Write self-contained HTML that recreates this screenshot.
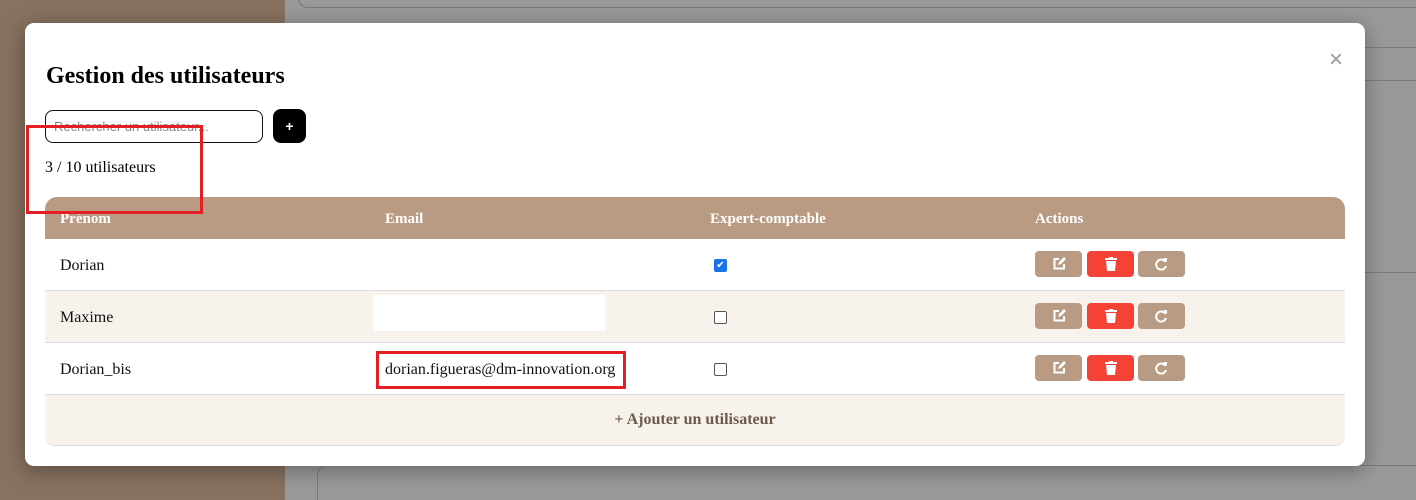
<!DOCTYPE html>
<html><head><meta charset="utf-8"><style>
*{box-sizing:border-box;margin:0;padding:0}
html,body{width:1416px;height:500px;overflow:hidden}
body{position:relative;background:#999;font-family:"Liberation Serif",serif}
.abs{position:absolute}
.modal{left:25px;top:23px;width:1340px;height:443px;background:#fff;border-radius:9px;box-shadow:0 4px 20px rgba(0,0,0,.35)}
h1{position:absolute;left:46px;top:63px;font-size:24px;font-weight:bold;color:#000}
.row{position:absolute;left:45px;width:1300px;font-size:16px;color:#111}
.cell{position:absolute;top:0;height:100%;display:flex;align-items:center;padding-top:2px}
.btn{position:absolute;width:47px;height:26px;border-radius:4px;background:#b89b82;display:flex;align-items:center;justify-content:center}
.cb{position:absolute;width:13px;height:13px;border:1px solid #555;border-radius:2px;background:#fff}
</style></head><body>
<div class="abs" style="left:0;top:0;width:285px;height:500px;background:#87715f"></div>
<div class="abs" style="left:298px;top:-20px;width:1130px;height:28px;border:1px solid #7a7a7a;border-radius:10px"></div>
<div class="abs" style="left:1365px;top:47px;width:60px;border-top:1px solid #7a7a7a"></div>
<div class="abs" style="left:1365px;top:80px;width:60px;border-top:1px solid #7a7a7a"></div>
<div class="abs" style="left:1365px;top:272px;width:60px;border-top:1px solid #7a7a7a"></div>
<div class="abs" style="left:317px;top:465px;width:1130px;height:60px;border:1px solid #7a7a7a;border-radius:10px"></div>
<div class="abs modal"></div>
<div class="abs" style="left:1329px;top:46px;font-family:'Liberation Sans',sans-serif;font-size:24px;color:#999">×</div>
<h1>Gestion des utilisateurs</h1>
<div class="abs" style="left:45px;top:110px;width:218px;height:33px;border:1px solid #111;border-radius:8px;font-family:'Liberation Sans',sans-serif;font-size:13px;color:#888;padding:8px 8px">Rechercher un utilisateur...</div>
<div class="abs" style="left:273px;top:109px;width:33px;height:34px;background:#000;border-radius:8px;color:#fff;font-family:'Liberation Sans',sans-serif;font-weight:bold;font-size:14px;display:flex;align-items:center;justify-content:center">+</div>
<div class="abs" style="left:45px;top:159px;font-size:16px">3 / 10 utilisateurs</div>
<div class="row" style="top:197px;height:42px;background:#b89b82;border-radius:12px 12px 0 0;color:#fff;font-weight:bold;font-size:15px">
<div class="cell" style="left:15px">Prénom</div><div class="cell" style="left:340px">Email</div><div class="cell" style="left:665px">Expert-comptable</div><div class="cell" style="left:990px">Actions</div></div>
<div class="row" style="top:239px;height:52px;background:#fff;border-bottom:1px solid #ddd"><div class="cell" style="left:15px">Dorian</div>
<div class="cb" style="left:669px;top:20px;background:#1a73e8;border-color:#1a73e8;color:#fff;font-size:10px;line-height:11px;text-align:center;font-family:'DejaVu Sans',sans-serif">✔</div></div>
<div class="row" style="top:291px;height:52px;background:#f7f2ec;border-bottom:1px solid #ddd"><div class="cell" style="left:15px">Maxime</div>
<div class="abs" style="left:328px;top:4px;width:232px;height:36px;background:#fff"></div>
<div class="cb" style="left:669px;top:20px"></div></div>
<div class="row" style="top:343px;height:52px;background:#fff;border-bottom:1px solid #ddd"><div class="cell" style="left:15px">Dorian_bis</div>
<div class="cell" style="left:340px">dorian.figueras@dm-innovation.org</div>
<div class="cb" style="left:669px;top:20px"></div></div>
<div class="row" style="top:395px;height:51px;background:#f7f2ec;border-bottom:1px solid #ddd;border-radius:0 0 10px 10px;display:flex;align-items:center;justify-content:center;font-weight:bold;color:#6e5a4a">+ Ajouter un utilisateur</div>
<div class="btn abs" style="left:1035px;top:251px"><svg width="14" height="14" viewBox="0 0 14 14"><path d="M7 2H2.5v9.5H12V7" fill="none" stroke="#fff" stroke-width="2"/><path d="M6 8l1-3 5-5 2 2-5 5z" fill="#fff"/></svg></div>
<div class="btn abs" style="left:1087px;top:251px;background:#f44336"><svg width="12" height="14" viewBox="0 0 12 14"><rect x="0" y="1" width="12" height="2" fill="#fff"/><rect x="4" y="0" width="4" height="2" fill="#fff"/><path d="M1 4h10l-1 10H2z" fill="#fff"/></svg></div>
<div class="btn abs" style="left:1138px;top:251px"><svg width="13" height="13" viewBox="0 0 13 13"><path d="M10.5 4A5 5 0 1 0 11 8" fill="none" stroke="#fff" stroke-width="2"/><path d="M8 0l4 0 0 4z" fill="#fff"/></svg></div>
<div class="btn abs" style="left:1035px;top:303px"><svg width="14" height="14" viewBox="0 0 14 14"><path d="M7 2H2.5v9.5H12V7" fill="none" stroke="#fff" stroke-width="2"/><path d="M6 8l1-3 5-5 2 2-5 5z" fill="#fff"/></svg></div>
<div class="btn abs" style="left:1087px;top:303px;background:#f44336"><svg width="12" height="14" viewBox="0 0 12 14"><rect x="0" y="1" width="12" height="2" fill="#fff"/><rect x="4" y="0" width="4" height="2" fill="#fff"/><path d="M1 4h10l-1 10H2z" fill="#fff"/></svg></div>
<div class="btn abs" style="left:1138px;top:303px"><svg width="13" height="13" viewBox="0 0 13 13"><path d="M10.5 4A5 5 0 1 0 11 8" fill="none" stroke="#fff" stroke-width="2"/><path d="M8 0l4 0 0 4z" fill="#fff"/></svg></div>
<div class="btn abs" style="left:1035px;top:355px"><svg width="14" height="14" viewBox="0 0 14 14"><path d="M7 2H2.5v9.5H12V7" fill="none" stroke="#fff" stroke-width="2"/><path d="M6 8l1-3 5-5 2 2-5 5z" fill="#fff"/></svg></div>
<div class="btn abs" style="left:1087px;top:355px;background:#f44336"><svg width="12" height="14" viewBox="0 0 12 14"><rect x="0" y="1" width="12" height="2" fill="#fff"/><rect x="4" y="0" width="4" height="2" fill="#fff"/><path d="M1 4h10l-1 10H2z" fill="#fff"/></svg></div>
<div class="btn abs" style="left:1138px;top:355px"><svg width="13" height="13" viewBox="0 0 13 13"><path d="M10.5 4A5 5 0 1 0 11 8" fill="none" stroke="#fff" stroke-width="2"/><path d="M8 0l4 0 0 4z" fill="#fff"/></svg></div>
<div class="abs" style="left:26px;top:125px;width:177px;height:89px;border:3px solid #e31e24"></div>
<div class="abs" style="left:376px;top:351px;width:250px;height:38px;border:3px solid #e31e24"></div>
</body></html>
